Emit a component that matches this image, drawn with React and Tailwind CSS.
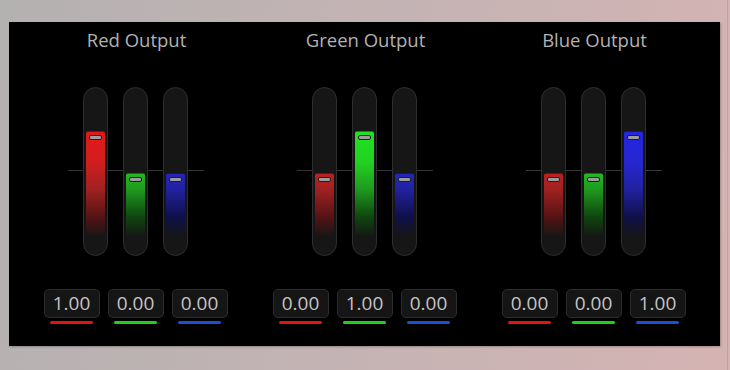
import React from "react";

const FILL = {
  r: "bg-[linear-gradient(to_bottom,#e41818_0%,#d01e1e_30%,#a02222_55%,#5a1414_80%,transparent_100%)]",
  g: "bg-[linear-gradient(to_bottom,#1ee41e_0%,#22d022_30%,#1f9a1f_55%,#0f4a0f_80%,transparent_100%)]",
  b: "bg-[linear-gradient(to_bottom,#2424e4_0%,#2626d0_30%,#2222a0_55%,#10104e_80%,transparent_100%)]",
};

const LINE = {
  r: "bg-[#e01414]",
  g: "bg-[#1cd01c]",
  b: "bg-[#1c4fd6]",
};

function Track({ c, full }) {
  return (
    <div className="relative w-[25px] h-full rounded-full bg-[#161616] border border-[#2e2e2e]">
      <div
        className={`absolute left-[2px] right-[2px] bottom-[18px] ${full ? "top-[43px]" : "top-[85px]"} ${FILL[c]} bg-[length:100%_106px] bg-bottom bg-no-repeat rounded-t-[2px] border-t border-black/40`}
      >
        <div className="mx-auto mt-[3px] w-[13px] h-[5px] rounded-[2px] bg-[#9c9c9c] border border-[#1e1e1e]" />
      </div>
    </div>
  );
}

function Group({ title, full }) {
  return (
    <div className="flex-1 flex flex-col items-center">
      <div className="h-[26px] leading-[26px] text-[18.5px] text-[#b2b2b2] mt-[5px] ml-[2px]">
        {title}
      </div>
      <div className="relative mt-[34px] w-[136px] h-[169px] flex justify-center gap-[15px]">
        <div className="absolute left-0 right-0 top-[83px] h-px bg-[#343434]" />
        <Track c="r" full={full === "r"} />
        <Track c="g" full={full === "g"} />
        <Track c="b" full={full === "b"} />
      </div>
      <div className="mt-[33px] flex gap-[8px]">
        {["r", "g", "b"].map((c) => (
          <div key={c} className="flex flex-col items-center">
            <div className="w-[56px] h-[29px] rounded-[5px] bg-[#151515] border border-[#2c2c2c] flex items-center justify-center text-[19px] text-[#c4c4c4] leading-none">
              {full === c ? "1.00" : "0.00"}
            </div>
            <div className={`mt-[3px] w-[43px] h-[3px] rounded-full ${LINE[c]}`} />
          </div>
        ))}
      </div>
    </div>
  );
}

export default function App() {
  return (
    <div
      className="relative w-[730px] h-[370px] overflow-hidden bg-[linear-gradient(100deg,#b4b1b1_0%,#c4b3b4_50%,#d6b3b3_100%)] pt-[22px] pl-[9px]"
      style={{ fontFamily: '"Open Sans", "Noto Sans", sans-serif' }}
    >
      <div className="absolute top-0 bottom-0 left-[727px] w-px bg-[#a89a9a]/60" />
      <div className="w-[711px] h-[324px] bg-black flex px-[12px] shadow-[1px_1px_2px_rgba(0,0,0,0.25)]">
        <Group title="Red Output" full="r" />
        <Group title="Green Output" full="g" />
        <Group title="Blue Output" full="b" />
      </div>
    </div>
  );
}
